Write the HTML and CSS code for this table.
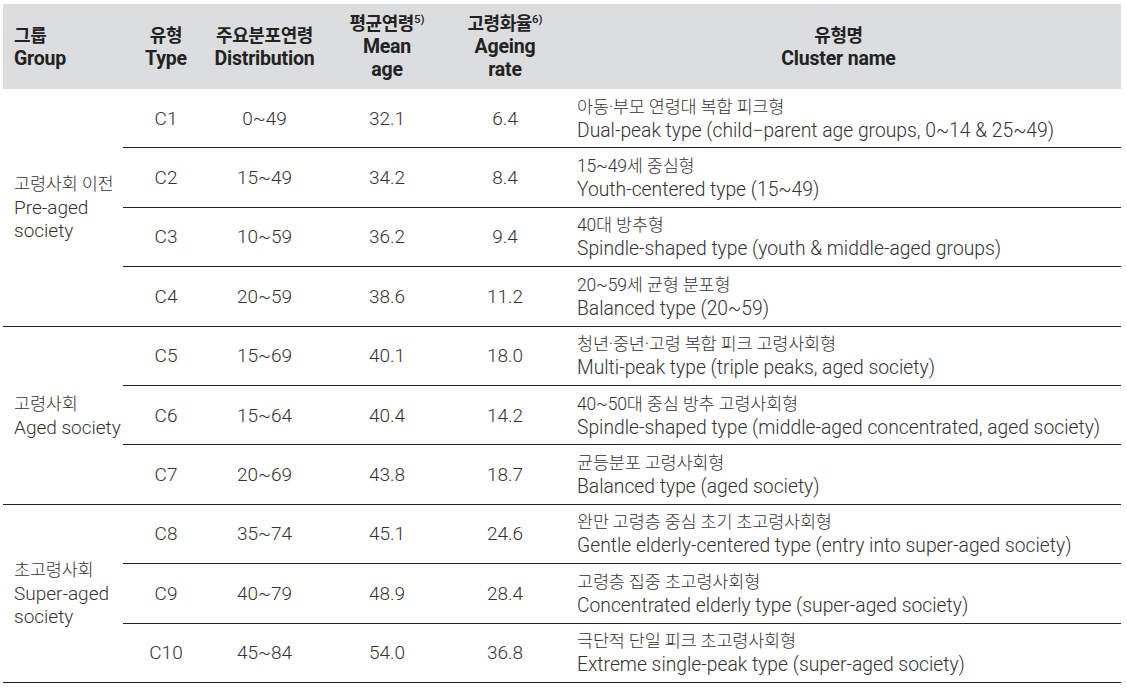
FILE: index.html
```html
<!DOCTYPE html>
<html lang="ko">
<head>
<meta charset="utf-8">
<link rel="stylesheet" href="styles.css">
</head>
<body>
<table class="tbl">
  <colgroup>
    <col class="c-group"><col class="c-type"><col class="c-dist"><col class="c-mean"><col class="c-rate"><col class="c-name">
  </colgroup>
  <thead>
    <tr>
      <th class="left"><span class="ko">그룹</span><br>Group</th>
      <th><span class="ko">유형</span><br>Type</th>
      <th><span class="ko">주요분포연령</span><br>Distribution</th>
      <th><span class="ko">평균연령</span><sup>5)</sup><br>Mean<br>age</th>
      <th><span class="ko">고령화율</span><sup>6)</sup><br>Ageing<br>rate</th>
      <th><span class="ko">유형명</span><br>Cluster name</th>
    </tr>
  </thead>
  <tbody>
    <tr>
      <td class="group" rowspan="4"><span class="ko">고령사회 이전</span><br>Pre-aged<br>society</td>
      <td>C1</td><td>0~49</td><td>32.1</td><td>6.4</td>
      <td class="name"><span class="ko">아동·부모 연령대 복합 피크형</span><br>Dual-peak type (child−parent age groups, 0~14 &amp; 25~49)</td>
    </tr>
    <tr>
      <td>C2</td><td>15~49</td><td>34.2</td><td>8.4</td>
      <td class="name"><span class="ko">15~49세 중심형</span><br>Youth-centered type (15~49)</td>
    </tr>
    <tr>
      <td>C3</td><td>10~59</td><td>36.2</td><td>9.4</td>
      <td class="name"><span class="ko">40대 방추형</span><br>Spindle-shaped type (youth &amp; middle-aged groups)</td>
    </tr>
    <tr>
      <td>C4</td><td>20~59</td><td>38.6</td><td>11.2</td>
      <td class="name"><span class="ko">20~59세 균형 분포형</span><br>Balanced type (20~59)</td>
    </tr>
    <tr>
      <td class="group" rowspan="3"><span class="ko">고령사회</span><br>Aged society</td>
      <td>C5</td><td>15~69</td><td>40.1</td><td>18.0</td>
      <td class="name"><span class="ko">청년·중년·고령 복합 피크 고령사회형</span><br>Multi-peak type (triple peaks, aged society)</td>
    </tr>
    <tr>
      <td>C6</td><td>15~64</td><td>40.4</td><td>14.2</td>
      <td class="name"><span class="ko">40~50대 중심 방추 고령사회형</span><br>Spindle-shaped type (middle-aged concentrated, aged society)</td>
    </tr>
    <tr>
      <td>C7</td><td>20~69</td><td>43.8</td><td>18.7</td>
      <td class="name"><span class="ko">균등분포 고령사회형</span><br>Balanced type (aged society)</td>
    </tr>
    <tr>
      <td class="group" rowspan="3"><span class="ko">초고령사회</span><br>Super-aged<br>society</td>
      <td>C8</td><td>35~74</td><td>45.1</td><td>24.6</td>
      <td class="name"><span class="ko">완만 고령층 중심 초기 초고령사회형</span><br>Gentle elderly-centered type (entry into super-aged society)</td>
    </tr>
    <tr>
      <td>C9</td><td>40~79</td><td>48.9</td><td>28.4</td>
      <td class="name"><span class="ko">고령층 집중 초고령사회형</span><br>Concentrated elderly type (super-aged society)</td>
    </tr>
    <tr>
      <td>C10</td><td>45~84</td><td>54.0</td><td>36.8</td>
      <td class="name"><span class="ko">극단적 단일 피크 초고령사회형</span><br>Extreme single-peak type (super-aged society)</td>
    </tr>
  </tbody>
</table>
</body>
</html>
```

FILE: styles.css
```css
html, body {
  margin: 0;
  padding: 0;
  background: #ffffff;
}
body {
  font-family: Roboto, "Noto Sans CJK KR", sans-serif;
  color: #333333;
}
.tbl {
  margin: 4px 0 0 3px;
  width: 1118px;
  border-collapse: collapse;
  table-layout: fixed;
}
.c-group { width: 120px; }
.c-type { width: 86px; }
.c-dist { width: 111px; }
.c-mean { width: 134px; }
.c-rate { width: 102px; }
.c-name { width: 565px; }

thead th {
  background: #dcdddf;
  height: 85px;
  padding: 0;
  font-size: 19.5px;
  line-height: 23px;
  font-weight: 700;
  color: #222222;
  text-align: center;
  vertical-align: middle;
  letter-spacing: -0.2px;
}
thead th .ko {
  font-size: 18px;
  letter-spacing: -0.4px;
}
thead th.left {
  text-align: left;
  padding-left: 11px;
}
sup {
  font-size: 11.5px;
  line-height: 0;
  vertical-align: 7px;
  font-weight: 500;
  letter-spacing: 0;
}
tbody td {
  height: 58.4px;
  padding: 0;
  font-size: 19px;
  line-height: 23px;
  font-weight: 300;
  text-align: center;
  vertical-align: middle;
  border-bottom: 1px solid #222222;
}
tbody td .ko {
  font-size: 17.5px;
  letter-spacing: -0.2px;
}
tbody td.group {
  text-align: left;
  padding-left: 11px;
}
tbody td.name {
  text-align: left;
  padding-left: 21px;
  white-space: nowrap;
  font-size: 19.3px;
}
```
